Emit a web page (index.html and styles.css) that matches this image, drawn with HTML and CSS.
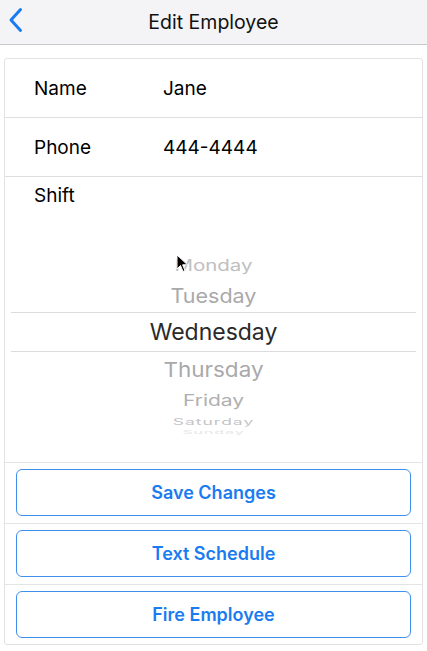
FILE: index.html
```html
<!DOCTYPE html>
<html>
<head>
<meta charset="utf-8">
<link rel="stylesheet" href="styles.css">
</head>
<body>
<header class="nav">
  <svg class="back" width="16" height="26" viewBox="0 0 16 26"><path d="M12.5 2.5 L3 13 L12.5 23.5" fill="none" stroke="#1a7cf0" stroke-width="3" stroke-linecap="round" stroke-linejoin="round"/></svg>
  <h1 class="title">Edit Employee</h1>
</header>
<main class="card">
  <div class="row"><span class="label">Name</span><span class="value">Jane</span></div>
  <div class="row"><span class="label">Phone</span><span class="value">444-4444</span></div>
  <div class="shift">
    <div class="shift-label">Shift</div>
    <div class="picker">
      <div class="day d-mon"><span>Monday</span></div>
      <div class="day d-tue"><span>Tuesday</span></div>
      <div class="day d-wed"><span>Wednesday</span></div>
      <div class="day d-thu"><span>Thursday</span></div>
      <div class="day d-fri"><span>Friday</span></div>
      <div class="day d-sat"><span>Saturday</span></div>
      <div class="day d-sun"><span>Sunday</span></div>
    </div>
    <svg class="cursor" width="14" height="20" viewBox="0 0 14 20"><path d="M1 1 L1 15 L4.5 11.5 L7 17.5 L9 16.6 L6.6 10.8 L11.5 10.8 Z" fill="#000" stroke="#fff" stroke-width="1"/></svg>
  </div>
  <div class="btn-cell"><button class="btn">Save Changes</button></div>
  <div class="btn-cell"><button class="btn">Text Schedule</button></div>
  <div class="btn-cell"><button class="btn">Fire Employee</button></div>
</main>
</body>
</html>
```
FILE: styles.css
```css
* { box-sizing: border-box; }
html, body { margin: 0; padding: 0; background: #fff; }
body {
  width: 427px;
  height: 651px;
  overflow: hidden;
  font-family: Inter, "Liberation Sans", sans-serif;
  color: #000;
}
.nav {
  height: 45px;
  background: #f4f4f6;
  border-bottom: 1px solid #c9c9cc;
  display: flex;
  align-items: center;
  justify-content: center;
  position: relative;
}
.back { position: absolute; left: 8px; top: 7px; }
.title {
  margin: 0;
  font-size: 19.5px;
  font-weight: 400;
  color: #111;
}
.card {
  margin: 13px 4px 0;
  border: 1px solid #e2e2e4;
  border-radius: 3px;
  height: 587px;
  position: relative;
}
.row {
  height: 59px;
  display: flex;
  align-items: center;
  border-bottom: 1px solid #dedee0;
  font-size: 19px;
}
.label { width: 158px; padding-left: 29px; }
.shift {
  height: 286px;
  border-bottom: 1px solid #e4e4e6;
  padding: 8px 6px 0;
  position: relative;
}
.shift-label { font-size: 19px; line-height: 22px; padding-left: 23px; }
.picker {
  margin-top: 43px;
  display: flex;
  flex-direction: column;
}
.day {
  display: flex;
  align-items: center;
  justify-content: center;
  color: #a9a9ab;
  white-space: nowrap;
  font-weight: 400;
}
.day span { display: inline-block; }
.d-mon { height: 30px; font-size: 20.5px; color: #c0c0c2; }
.d-mon span { transform: scaleY(0.74); }
.d-tue { height: 32px; font-size: 21.5px; }
.d-tue span { transform: scaleY(0.92); }
.d-wed {
  height: 40px;
  font-size: 23px;
  color: #2a2a2a;
  border-top: 1px solid #dcdcde;
  border-bottom: 1px solid #dcdcde;
}
.d-thu { height: 34px; font-size: 22.5px; }
.d-thu span { transform: scaleY(0.92); }
.d-fri { height: 28px; font-size: 21px; color: #b0b0b2; }
.d-fri span { transform: scaleY(0.76); }
.d-sat { height: 14px; font-size: 17.5px; color: #c4c4c6; letter-spacing: 1px; }
.d-sat span { transform: scaleY(0.5); }
.d-sun { height: 8px; font-size: 16px; color: #e6e6e8; overflow: hidden; letter-spacing: 1px; }
.d-sun span { transform: scaleY(0.3); }
.cursor { position: absolute; left: 171px; top: 77px; }
.btn-cell {
  height: 61px;
  padding: 6px 11px 0;
  border-bottom: 1px solid #e4e4e6;
}
.btn-cell:last-child { border-bottom: none; }
.btn {
  width: 100%;
  height: 47px;
  background: #fff;
  border: 1.5px solid #3f8fee;
  border-radius: 6px;
  color: #1a7cf0;
  font-family: Inter, "Liberation Sans", sans-serif;
  font-size: 18px;
  font-weight: 600;
}
```
